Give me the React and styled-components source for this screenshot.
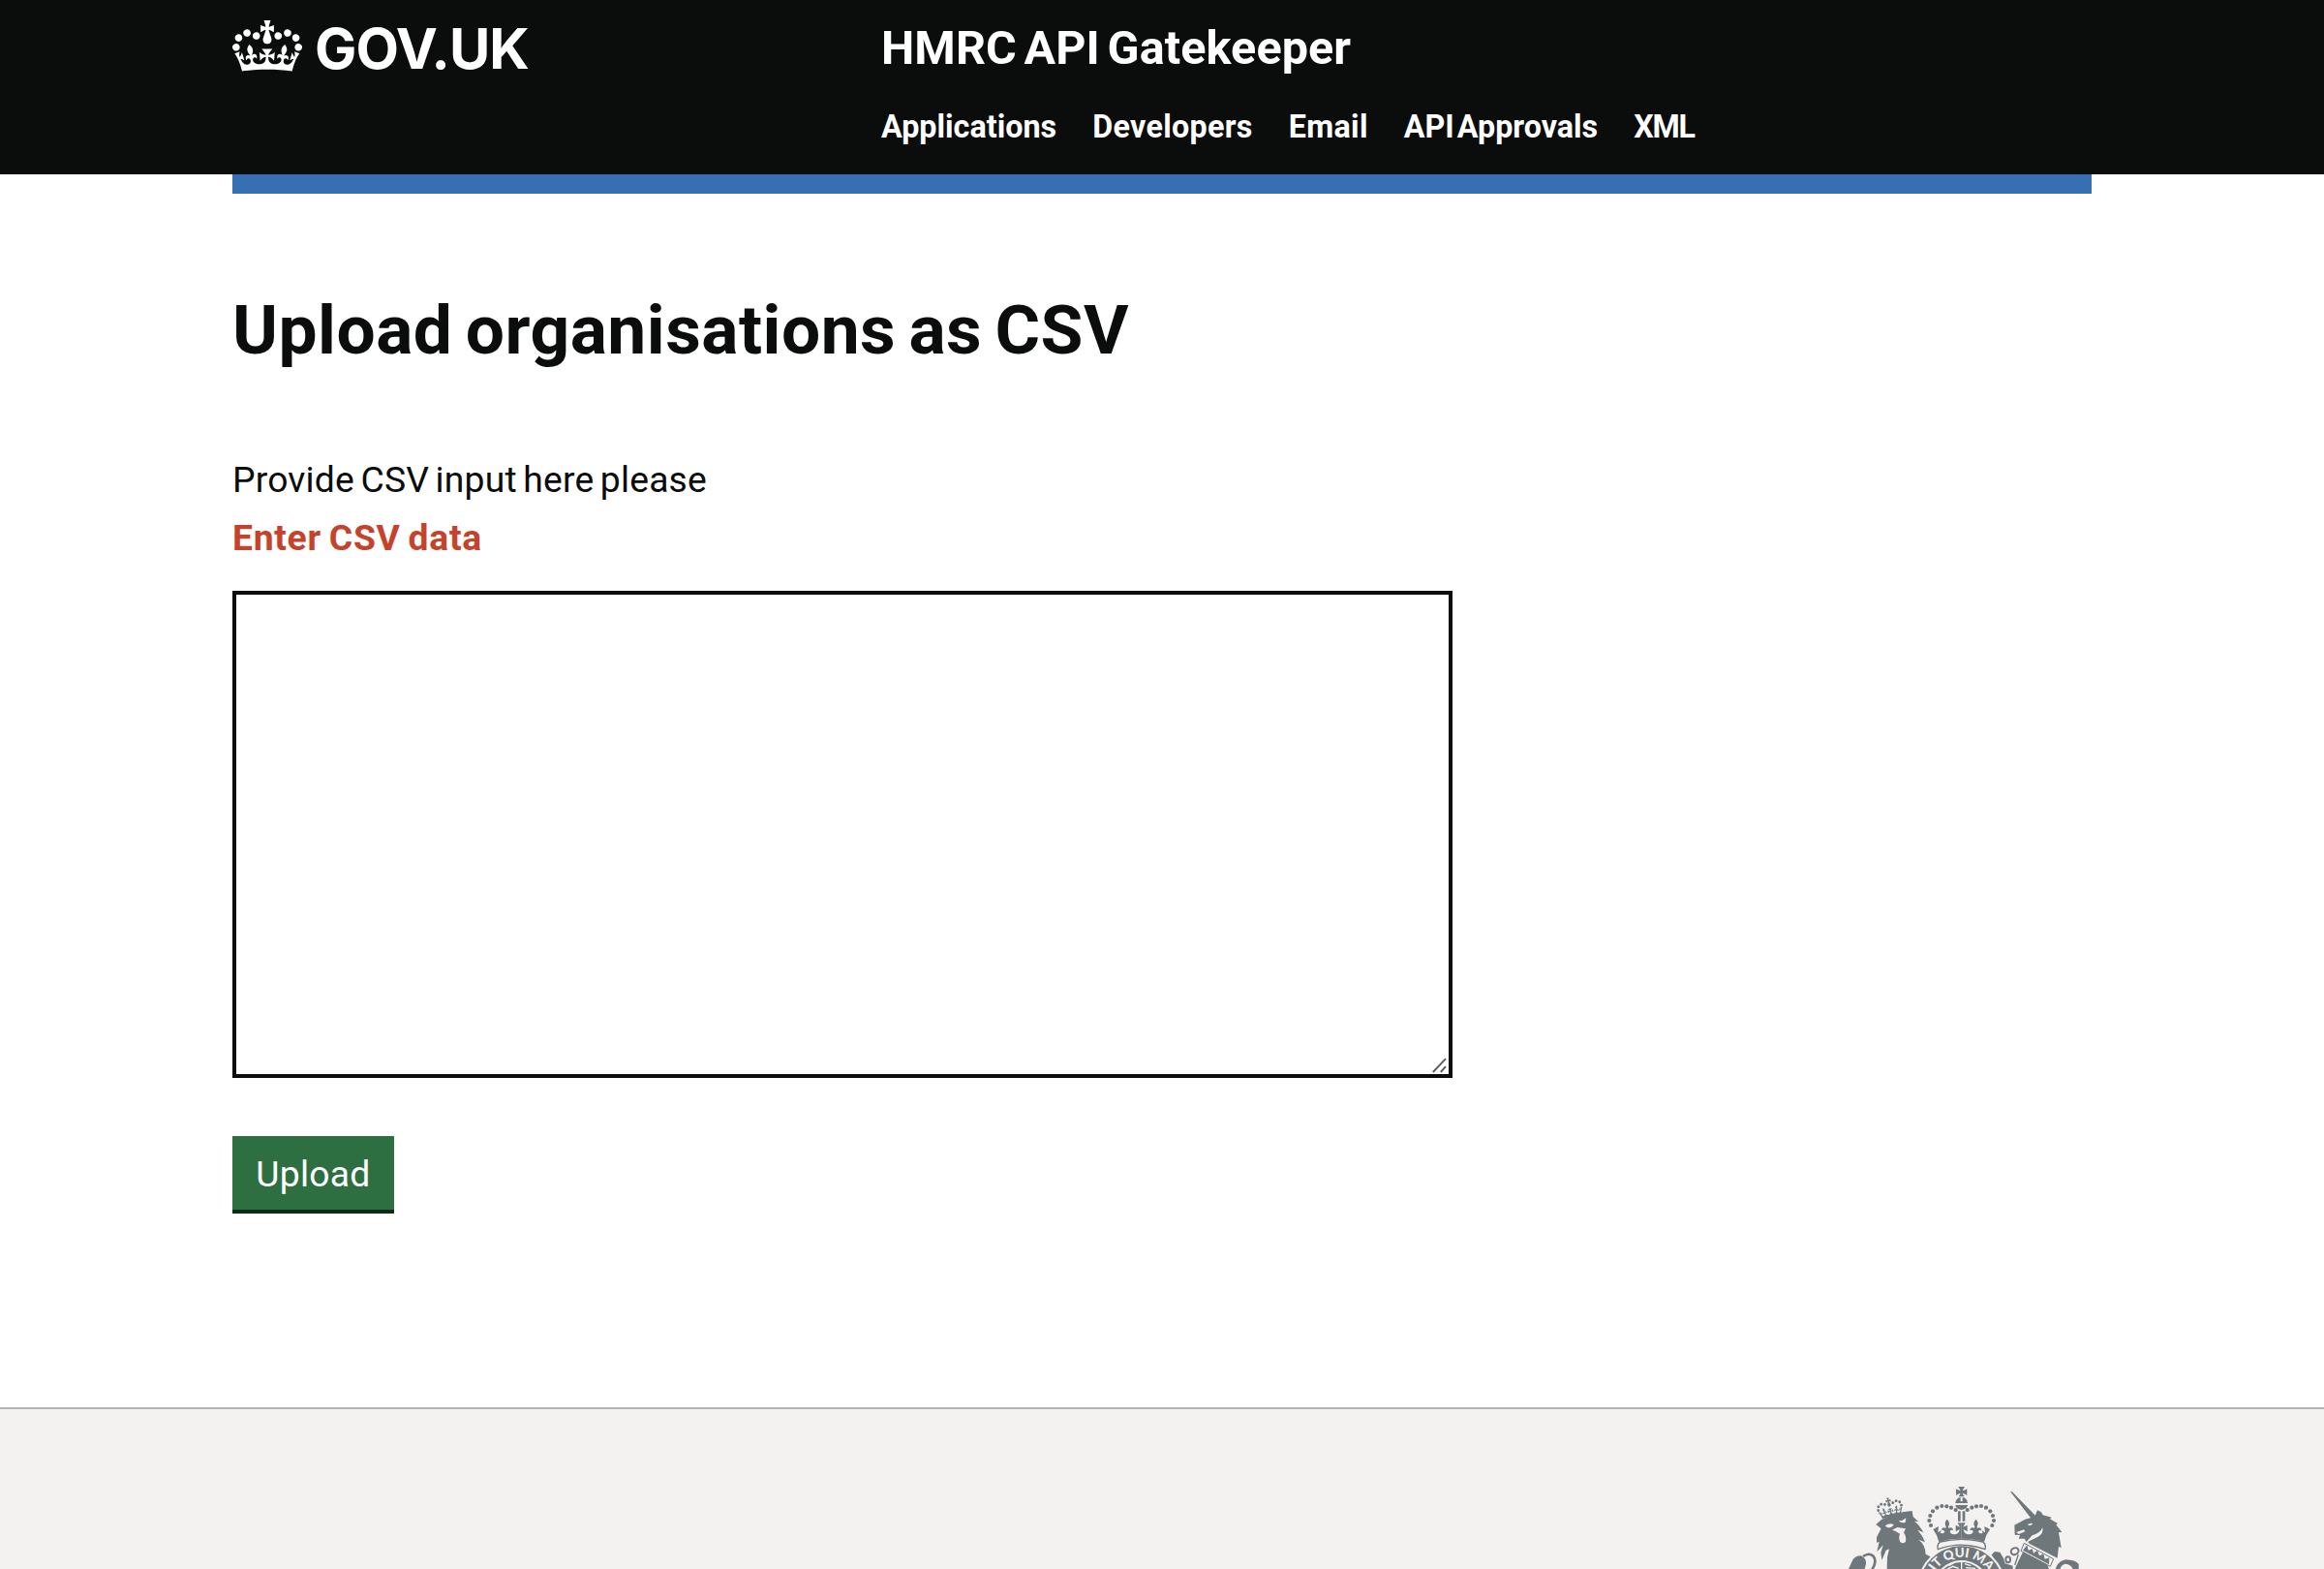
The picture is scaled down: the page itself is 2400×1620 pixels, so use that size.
import React from "react";
import styled, { createGlobalStyle } from "styled-components";

const ink = "#0b0c0c";
const crest = "#6f777b";
const paper = "#f3f2f1";

const GlobalStyle = createGlobalStyle`
  *, *::before, *::after { box-sizing: border-box; }
  body {
    margin: 0;
    background: #fff;
    color: ${ink};
    font-family: Roboto, "Liberation Sans", sans-serif;
  }
`;

const Page = styled.div`
  display: flex;
  flex-direction: column;
  height: 1620px;
  overflow: hidden;
`;

const Container = styled.div`
  width: 1920px;
  margin: 0 auto;
`;

const Header = styled.header`
  height: 180px;
  background: ${ink};
  color: #fff;
`;

const HeaderRow = styled(Container)`
  display: grid;
  grid-template-columns: 670px 1fr;
  padding-top: 20px;
`;

const HomeLink = styled.a`
  display: flex;
  align-items: flex-start;
  gap: 13px;
  height: 60px;
  color: #fff;
  text-decoration: none;
`;

const LogoCrown = styled.svg`
  width: 72px;
  height: 53px;
  margin-top: 1px;
`;

const LogoText = styled.span`
  font: 700 57.8px/60px Inter, "Liberation Sans", sans-serif;
  letter-spacing: -0.9px;
`;

const HeaderContent = styled.div`
  display: flex;
  flex-direction: column;
  gap: 31px;
`;

const ServiceName = styled.a`
  font-size: 48.5px;
  line-height: 60px;
  font-weight: 700;
  letter-spacing: 0.1px;
  word-spacing: -4.5px;
`;

const Nav = styled.nav`
  display: flex;
  gap: 37px;
`;

const NavLink = styled.a`
  font-size: 32.3px;
  line-height: 40px;
  font-weight: 700;
  white-space: nowrap;
  letter-spacing: ${(p) => p.$tracking}px;
  word-spacing: -5px;
`;

const BlueBar = styled(Container)`
  height: 20px;
  background: #366fb2;
`;

const Main = styled(Container).attrs({ as: "main" })`
  padding: 101px 0 200px;
`;

const Heading = styled.h1`
  margin: 0 0 89px;
  font-size: 71.3px;
  line-height: 80px;
  font-weight: 700;
  letter-spacing: 0.5px;
  word-spacing: -5px;
`;

const Label = styled.label`
  display: block;
  margin-bottom: 10px;
  font-size: 37.3px;
  line-height: 50px;
  letter-spacing: 0.18px;
  word-spacing: -3px;
`;

const ErrorMessage = styled.p`
  margin: 0 0 30px;
  font-size: 37.3px;
  line-height: 50px;
  font-weight: 700;
  letter-spacing: 0.7px;
  word-spacing: -2px;
  color: #c5432b;
`;

const InputWrap = styled.div`
  position: relative;
  width: 1260px;
  height: 503px;
  margin-bottom: 60px;
`;

const TextArea = styled.textarea`
  display: block;
  width: 100%;
  height: 100%;
  padding: 10px;
  border: 4px solid ${ink};
  border-radius: 0;
  background: #fff;
  font: 400 37.3px/50px Roboto, sans-serif;
  resize: none;
  outline: none;
`;

const Grip = styled.svg`
  position: absolute;
  right: 6px;
  bottom: 5px;
  width: 15px;
  height: 16px;
`;

const Button = styled.button`
  display: block;
  width: 167px;
  height: 80px;
  padding: 14px 0 12px;
  border: 0;
  border-bottom: 4px solid #0d2a1a;
  background: #2d6f40;
  color: #fff;
  font: 400 37.3px/50px Roboto, "Liberation Sans", sans-serif;
  letter-spacing: 0.25px;
  text-align: center;
`;

const Footer = styled.footer`
  flex: 1;
  border-top: 2px solid #b1b4b6;
  background: ${paper};
`;

const FooterRow = styled(Container)`
  display: flex;
  justify-content: flex-end;
  padding-top: 75px;
`;

const Arms = styled.svg`
  width: 260px;
  height: 90px;
`;

const CROWN =
  "M25 30.2c3.5 1.5 7.7-.2 9.1-3.7 1.5-3.6-.2-7.8-3.9-9.2-3.6-1.4-7.6.3-9.1 3.9-1.4 3.5.3 7.5 3.9 9zM9 39.5c3.6 1.5 7.8-.2 9.2-3.7 1.5-3.6-.2-7.8-3.9-9.1-3.6-1.5-7.6.2-9.1 3.8-1.4 3.5.3 7.5 3.8 9zM4.4 57.2c3.5 1.5 7.7-.2 9.1-3.8 1.5-3.6-.2-7.7-3.9-9.1-3.5-1.5-7.6.3-9.1 3.8-1.4 3.5.3 7.6 3.9 9.1zm38.3-21.4c3.5 1.5 7.7-.2 9.1-3.8 1.5-3.6-.2-7.7-3.9-9.1-3.6-1.5-7.6.3-9.1 3.8-1.3 3.6.4 7.7 3.9 9.1zm64.4-5.6c-3.6 1.5-7.8-.2-9.1-3.7-1.5-3.6.2-7.8 3.8-9.2 3.6-1.4 7.7.3 9.2 3.9 1.3 3.5-.4 7.5-3.9 9zm15.9 9.3c-3.6 1.5-7.7-.2-9.1-3.7-1.5-3.6.2-7.8 3.7-9.1 3.6-1.5 7.7.2 9.2 3.8 1.5 3.5-.3 7.5-3.8 9zm4.7 17.7c-3.6 1.5-7.8-.2-9.2-3.8-1.5-3.6.2-7.7 3.9-9.1 3.6-1.5 7.7.3 9.2 3.8 1.3 3.5-.4 7.6-3.9 9.1zM89.3 35.8c-3.6 1.5-7.8-.2-9.2-3.8-1.4-3.6.2-7.7 3.9-9.1 3.6-1.5 7.7.3 9.2 3.8 1.4 3.6-.3 7.7-3.9 9.1zM69.7 17.7l8.9 4.7V9.3l-8.9 2.8c-.2-.3-.5-.6-.9-.9L72.4 0H59.6l3.5 11.2c-.3.3-.6.5-.9.9l-8.8-2.8v13.1l8.8-4.7c.3.3.6.7.9.9l-5 15.4v.1c-.2.8-.4 1.6-.4 2.4 0 4.1 3.1 7.5 7 8.1h.2c.3 0 .7.1 1 .1.4 0 .7 0 1-.1h.2c4-.6 7.1-4.1 7.1-8.1 0-.8-.1-1.7-.4-2.4V34l-5.1-15.4c.4-.2.7-.6 1-.9zM66 92.8c16.9 0 32.8 1.1 47.1 3.2 4-16.9 8.9-26.7 14-33.5l-9.6-3.4c1 4.9 1.1 7.2 0 10.2-1.5-1.4-3-4.3-4.2-8.7L108.6 76c2.8-2 5-3.2 7.5-3.3-4.4 9.4-10 11.9-13.6 11.2-4.3-.8-6.3-4.6-5.6-7.9 1-4.7 5.7-5.9 8-.5 4.3-8.7-3-11.4-7.6-8.8 7.1-7.2 7.9-13.5 2.1-21.1-8 6.1-8.1 12.3-4.5 20.8-4.7-5.4-12.1-2.5-9.5 6.2 3.4-5.2 7.9-2 7.2 3.1-.6 4.3-6.4 7.8-13.5 7.2-10.3-.9-10.9-8-11.2-13.8 2.5-.5 7.1 1.8 11 7.3L80.2 60c-4.1 4.4-8 5.3-12.3 5.4 1.4-4.4 8-11.6 8-11.6H55.5s6.4 7.2 7.9 11.6c-4.2-.1-8-1-12.3-5.4l1.4 16.4c3.9-5.5 8.5-7.7 10.9-7.3-.3 5.8-.9 12.8-11.1 13.8-7.2.6-12.9-2.9-13.5-7.2-.7-5 3.8-8.3 7.1-3.1 2.7-8.7-4.6-11.6-9.4-6.2 3.7-8.5 3.6-14.7-4.6-20.8-5.8 7.6-5 13.9 2.2 21.1-4.7-2.6-11.9.1-7.7 8.8 2.3-5.5 7.1-4.2 8.1.5.7 3.3-1.3 7.1-5.7 7.9-3.5.7-9-1.8-13.5-11.2 2.5.1 4.7 1.3 7.5 3.3l-4.7-15.4c-1.2 4.4-2.7 7.2-4.3 8.7-1.1-3-.9-5.3 0-10.2l-9.5 3.4c5 6.9 9.9 16.7 14 33.5 14.8-2.1 30.8-3.2 47.7-3.2z";

const beads = [
  [419, 357], [405, 350], [391, 346], [376, 345], [361, 350],
  [348, 361], [340, 375], [337, 390], [342, 405],
];

const navItems = [
  ["Applications", 0],
  ["Developers", 0.3],
  ["Email", 0.3],
  ["API Approvals", 0],
  ["XML", -1.2],
];

function Lion() {
  return (
    <g>
      <g transform="translate(168 329) rotate(-13) scale(.62)">
        <path d={CROWN} />
      </g>
      <path d="M172 402 L188 388 Q230 364 284 360 L287 378 L303 393 L291 392 Q306 402 319 427 L301 419 Q316 435 324 457 L304 449 Q325 465 326 494 L345 504 L330 520 L322 540 H206 L207 503 L213 478 L203 482 L190 513 L187 490 L194 466 L175 487 L182 455 L174 459 L174 442 L188 415 Z" />
      <g fill={paper}>
        <path d="M200 406 Q214 396 227 402 Q222 413 208 412 Z" />
        <path d="M242 391 Q254 392 265 382 L263 395 Q252 400 242 391 Z" />
        <path d="M222 419 L238 411 L264 415 L258 427 Q267 441 264 455 Q256 464 247 456 Q241 444 246 431 L234 424 Z" />
      </g>
      <path d="M87 540 L98 516 Q104 499 126 499 Q143 508 141 524 L137 540 Z" />
      <path d="M132 501 Q150 488 164 500 Q176 517 160 541" fill="none" stroke={crest} strokeWidth="8" />
    </g>
  );
}

function Unicorn() {
  return (
    <g>
      <path d="M588 300 L594 301 L670 379 L656 388 Z" />
      <path d="M601 404 L634 386 L664 378 L672 358 L684 364 L689 373 L716 380 L711 385 L735 399 L730 403 L748 426 L738 427 L746 475 L738 470 L734 506 L722 500 L648 462 L642 456 L674 440 Q692 430 688 412 Q680 430 656 436 L638 456 L632 446 L614 446 L618 435 L602 434 Z" />
      <g fill={paper}>
        <path d="M641 403 Q650 395 658 400 Q652 408 641 403 Z" />
        <path d="M607 426 L630 418 L634 424 L614 432 Z" />
      </g>
      <path d="M629 484 L702 525 L708 540 H602 L616 510 Z" />
      <path d="M631 460 L722 509 L712 532 L621 484 Z" fill={paper} stroke={crest} strokeWidth="3" />
      <path d="M627 482 L640 466 L644 482 L656 478 L660 491 L672 482 L678 499 L691 493 L695 509 L709 505 L708 526 Z" />
      <g fill="none" stroke={crest} strokeWidth="6">
        <ellipse cx="602" cy="485" rx="12" ry="10" transform="rotate(-25 602 485)" />
        <ellipse cx="581" cy="511" rx="7" ry="9" />
        <path d="M613 496 L602 528" strokeWidth="4" />
      </g>
      <path d="M530 496 L540 486 L556 488 L567 506 L572 523 L596 530 L596 540 H552 L540 514 Z" />
      <path d="M728 541 Q733 516 760 511 Q790 512 800 525 V541 H782 Q778 526 758 524 Q746 527 742 541 Z" />
    </g>
  );
}

function RoyalCrown() {
  return (
    <g>
      <path d="M427 285 H447 Q442 292 440 298 Q447 297 454 292 V312 Q447 306 440 305 Q442 311 447 316 H427 Q432 311 434 305 Q427 306 420 312 V292 Q427 297 434 298 Q432 292 427 285 Z" />
      <path d="M418 336 Q420 320 434 318 V331 H440 V318 Q454 320 456 336 Z" />
      <path d="M418 342 H456 Q455 354 437 357 Q419 354 418 342 Z" />
      <path d="M426 361 H434 V392 H426 Z M440 361 H448 V392 H440 Z" />
      {beads.map(([x, y]) => (
        <React.Fragment key={x}>
          <circle cx={x} cy={y} r="6.3" />
          <circle cx={874 - x} cy={y} r="6.3" />
        </React.Fragment>
      ))}
      {[0, 1].map((side) => (
        <path
          key={side}
          transform={side ? "matrix(-1 0 0 1 874 0)" : undefined}
          d="M437 397 H425 L432 410 L419 404 V424 L431 417 Q430 431 416 433 Q403 434 401 424 Q404 417 411 421 Q410 408 397 413 L396 409 Q404 397 392 386 Q382 397 389 409 L388 413 Q376 408 375 420 Q382 417 385 424 Q382 433 371 428 L375 420 L364 427 L366 408 L349 417 Q362 434 367 456 Q398 446 437 446 Z"
        />
      ))}
      <path d="M371 456 Q437 440 503 456 Q514 463 510 479 Q437 452 364 479 Q360 463 371 456 Z" fill={paper} stroke={crest} strokeWidth="4" />
    </g>
  );
}

function RoyalArms() {
  return (
    <Arms viewBox="60 270 780 270" fill={crest}>
      <Lion />
      <Unicorn />
      <circle cx="437" cy="601" r="138" fill={paper} />
      <circle cx="437" cy="601" r="132" />
      <circle cx="437" cy="601" r="88" fill={paper} />
      <circle cx="437" cy="601" r="82" />
      <g fill="none" stroke={paper} strokeWidth="4">
        <path d="M437 516 V540 M392 541 L410 532 L428 538 M397 530 L412 522 M447 524 L466 530 M450 536 L480 538" />
      </g>
      <RoyalCrown />
      <path id="motto-arc" d="M339 601 A98 98 0 0 1 535 601" fill="none" />
      <text fill={paper} fontFamily="Lato, sans-serif" fontWeight="900" fontSize="40" textAnchor="middle">
        <textPath href="#motto-arc" startOffset="50%">IT QUI MA</textPath>
      </text>
    </Arms>
  );
}

export default function App() {
  return (
    <Page>
      <GlobalStyle />
      <Header>
        <HeaderRow>
          <HomeLink>
            <LogoCrown viewBox="0 0 132 97" fill="#fff">
              <path fillRule="evenodd" d={CROWN} />
            </LogoCrown>
            <LogoText>GOV.UK</LogoText>
          </HomeLink>
          <HeaderContent>
            <ServiceName>HMRC API Gatekeeper</ServiceName>
            <Nav>
              {navItems.map(([name, tracking]) => (
                <NavLink key={name} $tracking={tracking}>{name}</NavLink>
              ))}
            </Nav>
          </HeaderContent>
        </HeaderRow>
      </Header>
      <BlueBar />
      <Main>
        <Heading>Upload organisations as CSV</Heading>
        <Label htmlFor="csv">Provide CSV input here please</Label>
        <ErrorMessage>Enter CSV data</ErrorMessage>
        <InputWrap>
          <TextArea id="csv" />
          <Grip viewBox="0 0 15 16" fill="none" stroke="#5c5c5c" strokeWidth="1.9">
            <path d="M.8 15 14 1.2M8.8 15 14 9.2" />
          </Grip>
        </InputWrap>
        <Button>Upload</Button>
      </Main>
      <Footer>
        <FooterRow>
          <RoyalArms />
        </FooterRow>
      </Footer>
    </Page>
  );
}
